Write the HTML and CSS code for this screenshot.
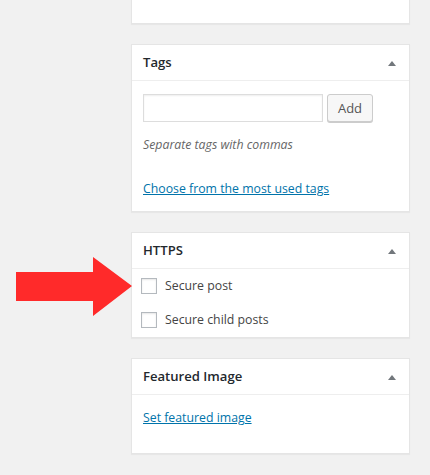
FILE: index.html
```html
<!DOCTYPE html>
<html>
<head>
<meta charset="utf-8">
<link rel="stylesheet" href="styles.css">
</head>
<body>
<div class="sidebar">
  <div class="postbox postbox-top"></div>

  <div class="postbox">
    <div class="hndle"><h2>Tags</h2><span class="toggle"></span></div>
    <div class="inside tags-inside">
      <div class="tag-row">
        <input type="text" class="tag-input">
        <button class="button">Add</button>
      </div>
      <p class="howto">Separate tags with commas</p>
      <p class="cloud"><a href="#">Choose from the most used tags</a></p>
    </div>
  </div>

  <div class="postbox https-box">
    <div class="hndle"><h2>HTTPS</h2><span class="toggle"></span></div>
    <div class="inside check-inside">
      <label class="check-row"><span class="checkbox"></span>Secure post</label>
      <label class="check-row"><span class="checkbox"></span>Secure child posts</label>
    </div>
    <svg class="red-arrow" width="120" height="62" viewBox="0 0 120 62">
      <polygon points="0,15 77,15 77,0 116,29 77,59 77,44 0,44" fill="#ff2a2a"/>
    </svg>
  </div>

  <div class="postbox">
    <div class="hndle"><h2>Featured Image</h2><span class="toggle"></span></div>
    <div class="inside featured-inside">
      <p><a href="#">Set featured image</a></p>
    </div>
  </div>
</div>
</body>
</html>
```

FILE: styles.css
```css
html, body {
  margin: 0;
  padding: 0;
  background: #f1f1f1;
  height: 100%;
  overflow: hidden;
}
body {
  font-family: "Open Sans", "Noto Sans", sans-serif;
  font-size: 12.3px;
  color: #444;
}
.sidebar {
  padding-left: 131px;
  display: flex;
  flex-direction: column;
  gap: 20px;
}
.postbox {
  position: relative;
  width: 279px;
  box-sizing: border-box;
  background: #fff;
  border: 1px solid #e5e5e5;
  box-shadow: 0 1px 1px rgba(0,0,0,.04);
}
.postbox-top {
  height: 42px;
  margin-top: -18px;
}
.hndle {
  display: flex;
  align-items: center;
  justify-content: space-between;
  height: 35px;
  padding: 0 13px 0 11px;
  border-bottom: 1px solid #eee;
}
.hndle h2 {
  margin: 0;
  font-size: 13.1px;
  font-weight: 600;
  color: #23282d;
  line-height: 19px;
}
.toggle {
  width: 0;
  height: 0;
  border-left: 4px solid transparent;
  border-right: 4px solid transparent;
  border-bottom: 5px solid #72777c;
  margin-top: 1px;
}
.inside {
  padding: 0 11px;
}
.inside p {
  margin: 0;
  line-height: 18px;
}
.tags-inside {
  padding-top: 13px;
  padding-bottom: 13px;
}
.tag-row {
  display: flex;
  gap: 4px;
  align-items: flex-start;
}
.tag-input {
  width: 180px;
  height: 28px;
  box-sizing: border-box;
  border: 1px solid #ddd;
  box-shadow: inset 0 1px 2px rgba(0,0,0,.07);
  margin: 0;
  padding: 0 6px;
  font: inherit;
}
.button {
  height: 28px;
  width: 46px;
  box-sizing: border-box;
  border: 1px solid #ccc;
  border-radius: 3px;
  background: #f7f7f7;
  box-shadow: 0 1px 0 #ccc;
  color: #555;
  font-family: inherit;
  font-size: 13px;
  padding: 0;
  line-height: 26px;
  margin: 0;
}
.howto {
  margin-top: 14px !important;
  font-style: italic;
  color: #666;
}
.cloud {
  margin-top: 26px !important;
}
a {
  color: #0073aa;
  text-decoration: underline;
}
.check-inside {
  padding: 9px 10px 9px 9px;
  display: flex;
  flex-direction: column;
  gap: 18px;
}
.check-row {
  display: flex;
  align-items: center;
  gap: 8px;
  height: 16px;
  line-height: 16px;
  color: #444;
}
.checkbox {
  width: 16px;
  height: 16px;
  box-sizing: border-box;
  border: 1px solid #b4b9be;
  background: #fff;
  box-shadow: inset 0 1px 2px rgba(0,0,0,.1);
  flex: none;
}
.red-arrow {
  position: absolute;
  left: -116px;
  top: 24px;
}
.featured-inside {
  padding-top: 14px;
  padding-bottom: 26px;
}
```
